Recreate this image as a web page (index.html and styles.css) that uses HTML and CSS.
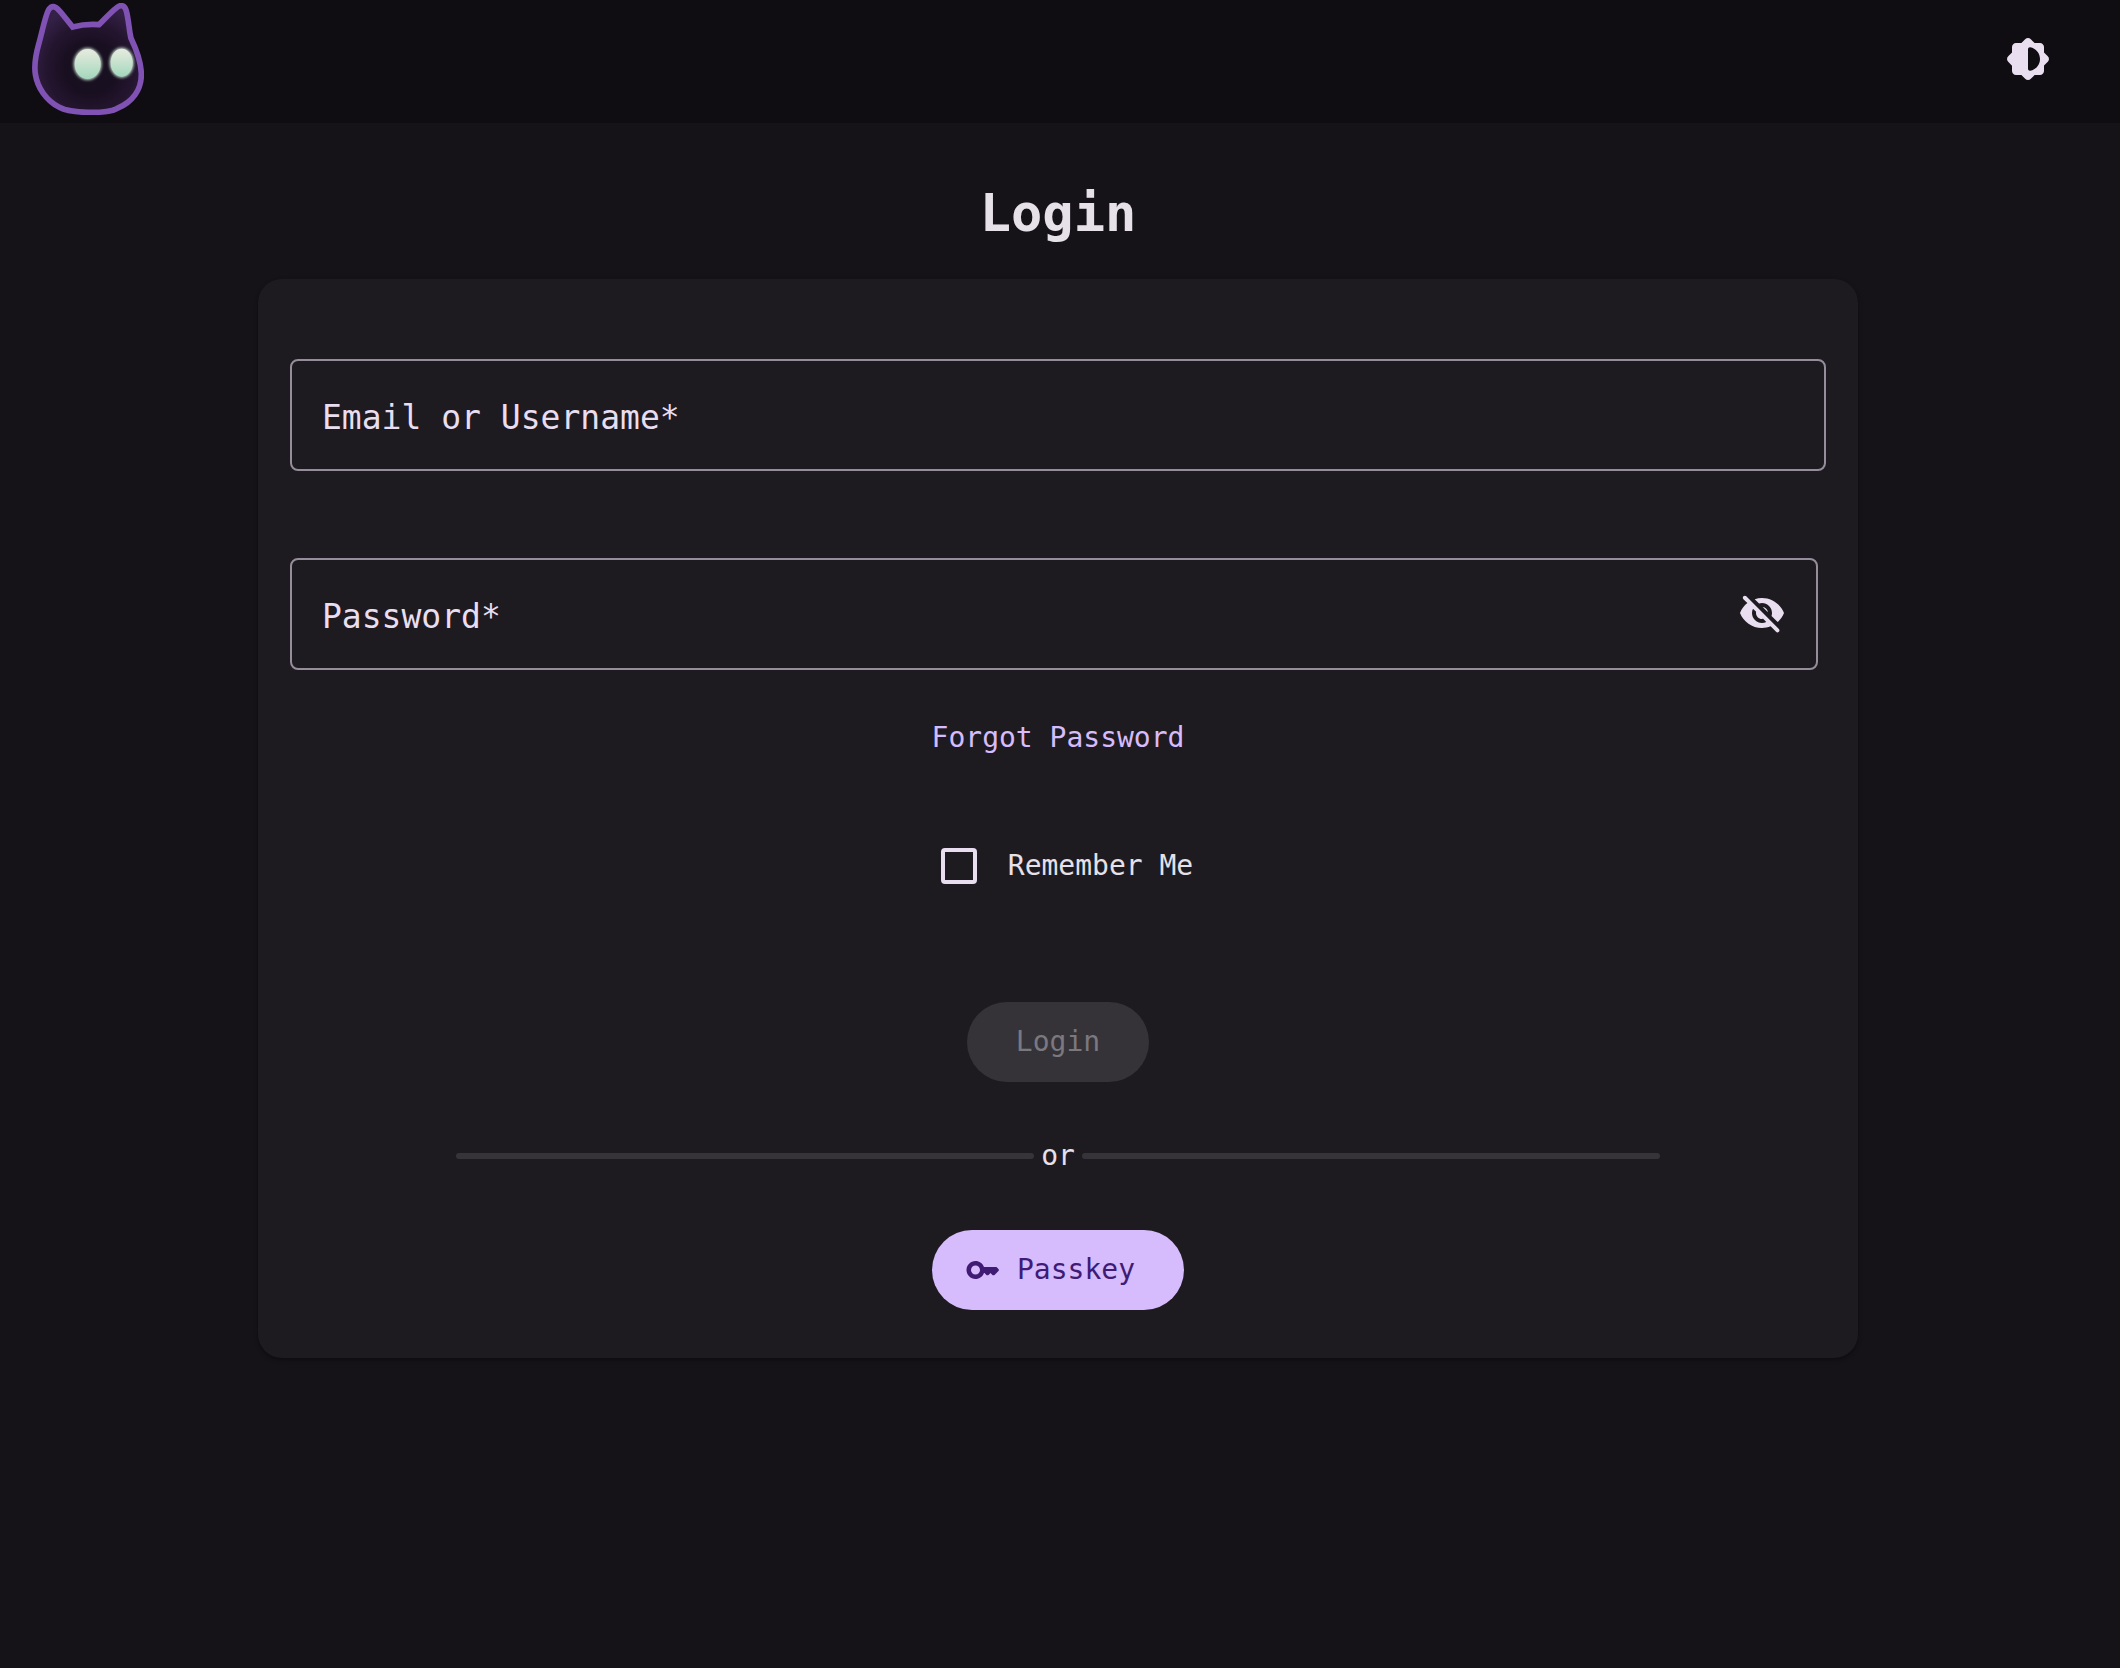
FILE: index.html
```html
<!DOCTYPE html>
<html lang="en">
<head>
  <meta charset="utf-8">
  <meta name="viewport" content="width=device-width, initial-scale=1">
  <title>Login</title>
  <link rel="stylesheet" href="styles.css">
</head>
<body>
  <header class="toolbar">
    <a class="logo" href="#" aria-label="Home">
      <svg viewBox="96 9 336 336" aria-hidden="true">
        <defs>
          <radialGradient id="fur" gradientUnits="userSpaceOnUse" cx="272" cy="205" r="190">
            <stop offset="0.4" stop-color="#180f20"/>
            <stop offset="0.7" stop-color="#24152f"/>
            <stop offset="1" stop-color="#352148"/>
          </radialGradient>
          <linearGradient id="eye" x1="0" y1="0" x2="0" y2="1">
            <stop offset="0" stop-color="#e8ebdf"/>
            <stop offset="1" stop-color="#a3d8bd"/>
          </linearGradient>
          <filter id="glow" x="-30%" y="-30%" width="160%" height="160%">
            <feGaussianBlur stdDeviation="5"/>
          </filter>
        </defs>
        <path d="M218 81C203 63 190 45 178 32C165 17 155 16 146 29C136 46 128 90 116 133C105 172 102 195 106 222C112 262 138 302 178 322C212 341 318 342 350 326C398 306 425 268 424 220C422 175 405 140 393 115C387 90 385 50 378 30C373 15 362 13 350 23C330 38 312 60 297 74C270 72 245 74 218 81Z" fill="url(#fur)" stroke="#8052b3" stroke-width="17"/>
        <g fill="#c4dccb" filter="url(#glow)">
          <ellipse cx="263" cy="192" rx="42" ry="48"/>
          <ellipse cx="365" cy="188" rx="36" ry="45"/>
        </g>
        <ellipse cx="263" cy="192" rx="39" ry="45" fill="url(#eye)"/>
        <ellipse cx="365" cy="188" rx="33" ry="42" fill="url(#eye)"/>
      </svg>
    </a>
    <button class="icon-button" type="button" aria-label="Toggle theme">
      <svg class="icon" viewBox="0 0 24 24" aria-hidden="true">
        <path d="M20 15.31l1.9-1.9c.78-.78.78-2.05 0-2.83L20 8.69V6c0-1.1-.9-2-2-2h-2.69l-1.9-1.9c-.78-.78-2.05-.78-2.83 0L8.69 4H6c-1.1 0-2 .9-2 2v2.69l-1.9 1.9c-.78.78-.78 2.05 0 2.83l1.9 1.9V18c0 1.1.9 2 2 2h2.69l1.9 1.9c.78.78 2.05.78 2.83 0l1.9-1.9H18c1.1 0 2-.9 2-2v-2.69zm-8 1.59V7.1c0-.61.55-1.11 1.15-.99C15.91 6.65 18 9.08 18 12s-2.09 5.35-4.85 5.89c-.6.12-1.15-.38-1.15-.99z"/>
      </svg>
    </button>
  </header>

  <main class="page">
    <h1 class="title">Login</h1>
    <form class="card">
      <div class="field">
        <label class="field-label" for="identity">Email or Username*</label>
        <input class="field-input" id="identity" type="text" autocomplete="username" required>
      </div>

      <div class="field field-password">
        <label class="field-label" for="password">Password*</label>
        <input class="field-input" id="password" type="password" autocomplete="current-password" required>
        <button class="icon-button" type="button" aria-label="Show password">
          <svg class="icon" viewBox="0 0 24 24" aria-hidden="true">
            <path d="M12 6.5c2.76 0 5 2.24 5 5 0 .51-.1 1-.24 1.46l3.06 3.06c1.39-1.23 2.49-2.77 3.18-4.53C21.27 7.11 17 4 12 4c-1.27 0-2.49.2-3.64.57l2.17 2.17c.47-.14.96-.24 1.47-.24zM2.71 3.16c-.39.39-.39 1.02 0 1.41l1.97 1.97C3.06 7.83 1.77 9.53 1 11.5 2.73 15.89 7 19 12 19c1.52 0 2.97-.3 4.31-.82l2.72 2.72c.39.39 1.02.39 1.41 0 .39-.39.39-1.02 0-1.41L4.13 3.16c-.39-.39-1.03-.39-1.42 0zM12 16.5c-2.76 0-5-2.24-5-5 0-.77.18-1.5.49-2.14l1.57 1.57c-.03.18-.06.37-.06.57 0 1.66 1.34 3 3 3 .2 0 .38-.03.57-.07L14.14 16c-.65.32-1.37.5-2.14.5zm2.97-5.33c-.15-1.4-1.25-2.49-2.64-2.64l2.64 2.64z"/>
          </svg>
        </button>
      </div>

      <a class="forgot" href="#">Forgot Password</a>

      <div class="remember">
        <input class="checkbox" id="remember" type="checkbox">
        <label for="remember">Remember Me</label>
      </div>

      <button class="button button-login" type="submit" disabled>Login</button>

      <div class="divider"><span>or</span></div>

      <button class="button button-passkey" type="button">
        <svg class="key" viewBox="0 0 24 24" aria-hidden="true">
          <path d="M20.59 10h-7.94c-.83-2.33-3.04-4-5.65-4-3.31 0-6 2.69-6 6s2.69 6 6 6c2.61 0 4.83-1.67 5.65-4H13l1.29 1.29c.39.39 1.02.39 1.41 0L17 14l1.29 1.29c.39.39 1.03.39 1.42 0l2.59-2.61c.39-.39.39-1.03-.01-1.42l-.99-.97c-.2-.19-.45-.29-.71-.29zM7 15c-1.65 0-3-1.35-3-3s1.35-3 3-3 3 1.35 3 3-1.35 3-3 3z"/>
        </svg>
        Passkey
      </button>
    </form>
  </main>
</body>
</html>
```
FILE: styles.css
```css
* {
  box-sizing: border-box;
}

body {
  margin: 0;
  min-height: 100vh;
  background: #151318;
  color: #e6e0e9;
  font-family: "DejaVu Sans Mono", monospace;
  font-size: 28px;
  line-height: 40px;
}

button,
input {
  font: inherit;
  color: inherit;
}

.toolbar {
  display: flex;
  align-items: center;
  justify-content: space-between;
  padding: 3px 68px 8px 32px;
  background: #0f0d12;
}

.logo,
.logo svg {
  display: block;
  width: 112px;
  height: 112px;
}

.icon-button {
  display: flex;
  padding: 0;
  border: 0;
  background: none;
  color: #e9def0;
  cursor: pointer;
}

.icon {
  width: 48px;
  height: 48px;
  fill: currentColor;
}

.page {
  display: flex;
  flex-direction: column;
  align-items: center;
  padding: 58px 4px 48px 0;
}

.title {
  margin: 0 0 34px;
  font-size: 52px;
  line-height: 64px;
  font-weight: 700;
}

.card {
  display: flex;
  flex-direction: column;
  align-items: center;
  width: 100%;
  max-width: 1600px;
  padding: 80px 32px 48px;
  border-radius: 24px;
  background: #1e1b20;
  box-shadow: 0 2px 4px rgba(0, 0, 0, 0.4);
}

.field {
  display: grid;
  grid-template-columns: 1fr auto;
  align-items: center;
  align-self: stretch;
  height: 112px;
  border: 2px solid #958d9b;
  border-radius: 8px;
  color: #e9def0;
  font-size: 33px;
}

.field-label,
.field-input {
  grid-area: 1 / 1;
}

.field-label {
  padding: 6px 0 0 30px;
  pointer-events: none;
}

.field-input {
  width: 100%;
  height: 100%;
  padding: 0 30px;
  border: 0;
  outline: 0;
  background: none;
}

.field:focus-within .field-label {
  color: #d6bbfd;
}

/* The password box stops short of the card's inner edge. */
.field-password {
  margin: 87px 8px 0 0;
  padding-right: 30px;
}

.forgot {
  margin-top: 48px;
  color: #d6bbfd;
  text-decoration: none;
}

.remember {
  display: flex;
  align-items: center;
  gap: 31px;
  height: 80px;
  margin-top: 68px;
  padding-left: 18px;
}

.checkbox {
  appearance: none;
  width: 36px;
  height: 36px;
  margin: 0;
  border: 4px solid #e9def0;
  border-radius: 4px;
}

.checkbox:checked {
  background: #d6bbfd;
}

.button {
  display: flex;
  align-items: center;
  gap: 16px;
  height: 80px;
  padding: 0 49px;
  border: 0;
  border-radius: 40px;
}

.button-login {
  margin-top: 96px;
  background: #353338;
  color: #7b787f;
}

.divider {
  display: flex;
  align-items: center;
  gap: 7px;
  width: calc(80% - 24px);
  margin: 54px 0;
}

.divider::before,
.divider::after {
  content: "";
  flex: 1;
  height: 6px;
  border-radius: 3px;
  background: #363339;
}

.button-passkey {
  padding-left: 33px;
  background: #d6bbfd;
  color: #3f1b74;
  cursor: pointer;
}

.key {
  width: 36px;
  height: 36px;
  fill: currentColor;
}
```
